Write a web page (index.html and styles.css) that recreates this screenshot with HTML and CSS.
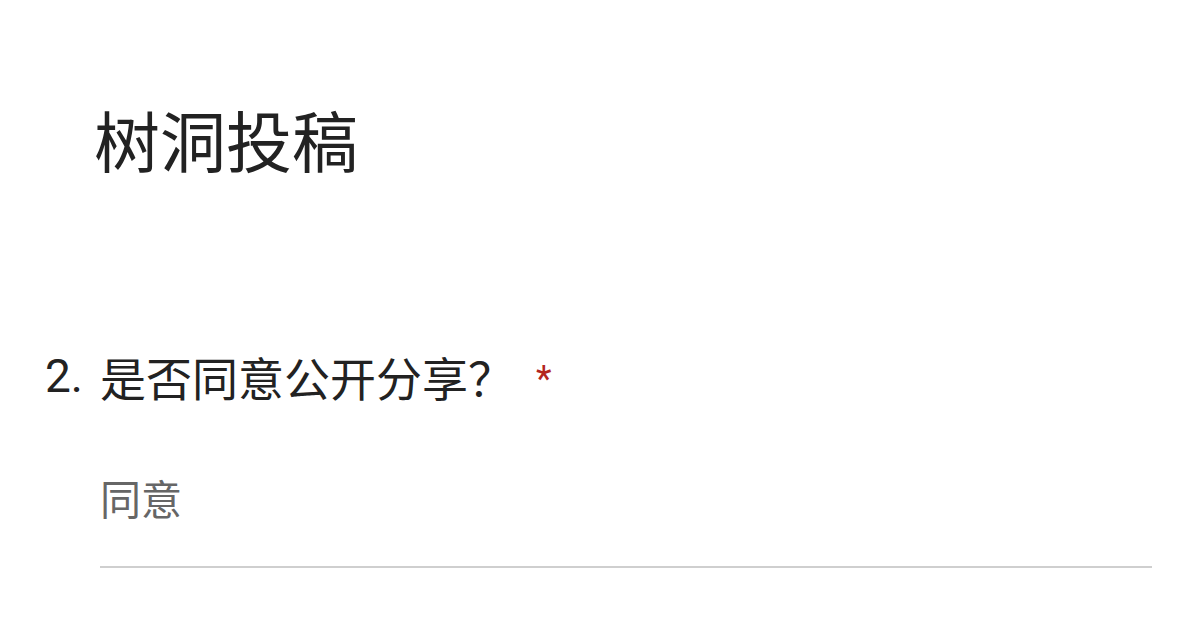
FILE: index.html
```html
<!DOCTYPE html>
<html lang="zh">
<head>
<meta charset="utf-8">
<link rel="stylesheet" href="styles.css">
</head>
<body>
<div class="page">
  <h1 class="title">树洞投稿</h1>
  <div class="question">
    <span class="num">2.</span>
    <span class="qtext">是否同意公开分享？</span>
    <span class="req">*</span>
  </div>
  <div class="answer">同意</div>
</div>
</body>
</html>
```
FILE: styles.css
```css
html, body {
  margin: 0;
  padding: 0;
  background: #fff;
}
.page {
  width: 1200px;
  height: 637px;
  overflow: hidden;
  font-family: "Noto Sans CJK SC", "Noto Sans", sans-serif;
  color: #212121;
}
.title {
  margin: 0;
  padding: 94px 0 0 94px;
  font-size: 66px;
  font-weight: 400;
  line-height: 88px;
  color: #222;
}
.question {
  display: flex;
  align-items: flex-start;
  margin-top: 164px;
  padding-left: 45px;
  font-size: 46px;
  line-height: 60px;
  color: #222;
}
.num {
  width: 55px;
  font-family: Roboto, "Noto Sans", sans-serif;
}
.req {
  color: #b3261e;
  margin-left: 22px;
  margin-top: 13px;
  font-size: 36px;
  line-height: 40px;
  font-family: Roboto, sans-serif;
}
.answer {
  margin: 64px 48px 0 100px;
  padding-bottom: 42px;
  font-size: 41px;
  line-height: 54px;
  color: #666;
  border-bottom: 2px solid #cfcfcf;
}
```
